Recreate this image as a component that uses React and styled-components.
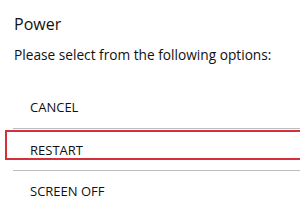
import React from 'react'
import styled, { createGlobalStyle } from 'styled-components'

const Global = createGlobalStyle`
  html, body {
    margin: 0;
    padding: 0;
    background: #ffffff;
  }
  body {
    font-family: "Open Sans", "DejaVu Sans", sans-serif;
    color: #111111;
    overflow: hidden;
  }
`

const Dialog = styled.div`
  width: 300px;
  height: 210px;
  overflow: hidden;
  display: flex;
  flex-direction: column;
`

const Title = styled.h1`
  margin: 13px 0 0 14px;
  font-size: 16px;
  font-weight: 500;
  line-height: 22px;
`

const Prompt = styled.p`
  margin: 10px 0 0 14px;
  font-size: 13.7px;
  font-weight: 500;
  line-height: 19px;
  white-space: nowrap;
`

const Options = styled.ul`
  list-style: none;
  margin: 23px 0 0 0;
  padding: 0;
  display: flex;
  flex-direction: column;
`

const Option = styled.li`
  font-size: 13px;
  font-weight: 500;
  line-height: 16px;
  text-transform: uppercase;
  padding: ${p => p.$pad || '0'};
  margin: ${p => p.$selected ? '1px -10px 10px 5px' : '0'};
  border: ${p => p.$selected ? '2px solid #d4303c' : 'none'};
  padding-left: ${p => p.$selected ? '23px' : '30px'};
`

const Divider = styled.li`
  height: 1px;
  margin-left: 13px;
  background: #bdbdbd;
`

export default function App() {
  return (
    <Dialog>
      <Global />
      <Title>Power</Title>
      <Prompt>Please select from the following options:</Prompt>
      <Options>
        <Option $pad="12px 0 13px">Cancel</Option>
        <Divider />
        <Option $selected $pad="10px 0 0">Restart</Option>
        <Divider />
        <Option $pad="12px 0 0">Screen off</Option>
      </Options>
    </Dialog>
  )
}
